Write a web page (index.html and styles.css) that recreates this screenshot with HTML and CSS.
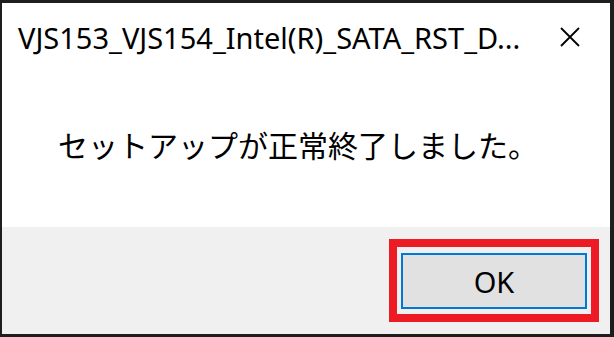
FILE: index.html
```html
<!DOCTYPE html>
<html lang="ja">
<head>
    <meta charset="UTF-8">
    <title>Setup</title>
    <link rel="stylesheet" href="styles.css">
</head>
<body>

<!-- Message box window -->
<div class="dialog">
    <div class="title-bar">
        <span class="title">VJS153_VJS154_Intel(R)_SATA_RST_D...</span>
        <button class="btn-close" aria-label="Close">
            <svg width="20" height="20" viewBox="0 0 20 20">
                <path d="M1 1 L19 19 M19 1 L1 19" stroke="#000" stroke-width="1.8" fill="none"/>
            </svg>
        </button>
    </div>

    <div class="message">セットアップが正常終了しました。</div>

    <div class="footer">
        <!-- red highlight around the default button -->
        <div class="highlight">
            <button class="btn-ok">OK</button>
        </div>
    </div>
</div>

</body>
</html>
```

FILE: styles.css
```css
html, body {
    margin: 0;
    padding: 0;
    height: 100%;
}

body {
    background-color: #1e1e1e;
    font-family: 'Noto Sans', 'Noto Sans CJK JP', sans-serif;
    color: #000;
}

.dialog {
    box-sizing: border-box;
    height: 337px;
    width: 614px;
    border-style: solid;
    border-color: #1e1e1e;
    border-width: 3px 4px 3px 2px;
    background: #fff;
    display: flex;
    flex-direction: column;
}

.title-bar {
    height: 68px;
    display: flex;
    align-items: center;
    padding-left: 16px;
    padding-right: 30px;
}

.title {
    flex: 1;
    font-size: 29px;
    white-space: nowrap;
}

.btn-close {
    background: none;
    border: none;
    padding: 0;
    width: 20px;
    height: 20px;
    display: flex;
}

.message {
    height: 156px;
    box-sizing: border-box;
    padding-left: 56px;
    padding-top: 55px;
    font-family: 'Noto Sans CJK JP', sans-serif;
    font-size: 30px;
    line-height: 36px;
}

.footer {
    flex: 1;
    background: #f0f0f0;
    display: flex;
    justify-content: flex-end;
    align-items: flex-start;
    padding-top: 12px;
    padding-right: 11px;
}

.highlight {
    border: 8px solid #ed1c24;
    padding: 6px 4px 5px 4px;
}

.btn-ok {
    display: block;
    box-sizing: border-box;
    width: 186px;
    height: 56px;
    background: #e1e1e1;
    border: 2px solid #0078d7;
    font-family: 'Noto Sans', sans-serif;
    font-size: 29px;
    color: #000;
    padding: 0;
}
```
